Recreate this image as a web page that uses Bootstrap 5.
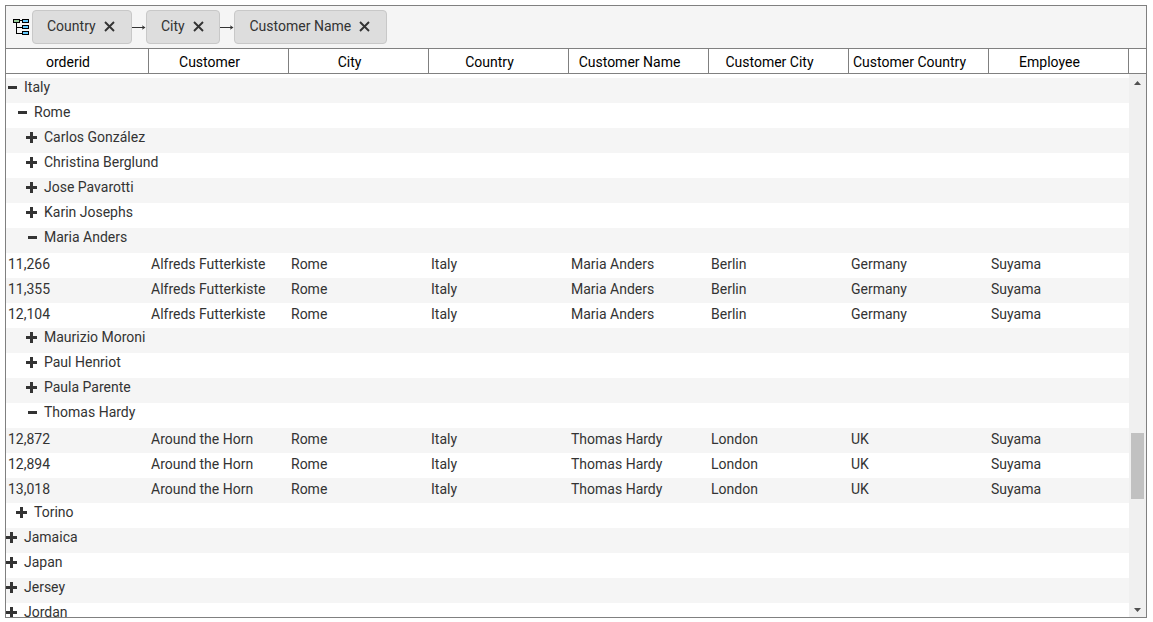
<!DOCTYPE html>
<html lang="en">
<head>
<meta charset="utf-8">
<title>Orders by country</title>
<link href="https://cdn.jsdelivr.net/npm/bootstrap@5.3.0/dist/css/bootstrap.min.css" rel="stylesheet">
<style>
body{font-family:Roboto,"Liberation Sans",sans-serif;font-size:14px;line-height:18px;color:#333;background:#fff}
.pivot-grid{margin:5px 0 0 5px;width:1142px;height:613px;border:1px solid #808080}
.group-bar{height:42px;background:#f5f5f5;padding-left:7px}
.group-icon{width:17px;height:18px;margin-right:2px}
.group-chip{height:34px;background:#ddd;border:1px solid #c8c8c8;border-radius:4px;padding:0 14px 2px 14px}
.group-chip svg{width:11px;height:11px;margin-left:8px}
.group-arrow{width:14px}
.head-row{height:26px;border-top:1px solid #808080;border-bottom:1px solid #808080;color:#000}
.head-cell{width:140px;border-right:1px solid #808080;padding-top:4px;padding-right:18px}
.head-cell:first-child{width:143px}
.grid-rows{padding-top:4px}
.grid-line{height:25px}
.grid-line:nth-child(odd){background:#f5f5f5}
.group-line svg{width:12px;height:12px;margin:4px 6px 0 0}
.data-cell{width:140px;padding:2px 0 0 2px}
.data-cell:first-child{width:143px}
.scroll-track{width:17px;background:#f0f0f0}
.scroll-arrow{height:17px;display:block}
.scroll-thumb{width:13px;height:66px;margin:342px 0 0 2px;background:#c1c1c1}
</style>
</head>
<body>
<div class="pivot-grid d-flex flex-column overflow-hidden">
  <div class="group-bar d-flex align-items-center flex-shrink-0">
    <svg class="group-icon" viewBox="0 0 17 18" shape-rendering="crispEdges"><path d="M6 2.500h4M3.500 4v11.500h6M3.500 9.500h6" stroke="#000" fill="none"/><path d="M.5 1.500h6v3h-6z" fill="#9c9" stroke="#000"/><path d="M9.500 1.500h6v3h-6zM9.500 7.500h6v3h-6zM9.500 13.500h6v3h-6z" fill="#6cf" stroke="#000"/></svg>
    <div class="group-chip d-flex align-items-center" style="width:100px">Country<svg viewBox="0 0 11 11"><path d="M1 1l9 9M10 1l-9 9" stroke="#333" stroke-width="1.900"/></svg></div>
    <svg class="group-arrow" height="10" viewBox="0 0 14 10"><path d="M0 5.500h12" stroke="#333"/><path d="M10 3.200l3.500 2.300L10 7.800l.8-2.300z" fill="#333"/></svg>
    <div class="group-chip d-flex align-items-center" style="width:74px">City<svg viewBox="0 0 11 11"><path d="M1 1l9 9M10 1l-9 9" stroke="#333" stroke-width="1.900"/></svg></div>
    <svg class="group-arrow" height="10" viewBox="0 0 14 10"><path d="M0 5.500h12" stroke="#333"/><path d="M10 3.200l3.500 2.300L10 7.800l.8-2.300z" fill="#333"/></svg>
    <div class="group-chip d-flex align-items-center text-nowrap" style="width:153px;padding-left:14.5px">Customer Name<svg viewBox="0 0 11 11"><path d="M1 1l9 9M10 1l-9 9" stroke="#333" stroke-width="1.900"/></svg></div>
  </div>
  <div class="head-row d-flex flex-shrink-0 text-center text-nowrap">
    <div class="head-cell">orderid</div><div class="head-cell">Customer</div><div class="head-cell">City</div><div class="head-cell">Country</div><div class="head-cell">Customer Name</div><div class="head-cell">Customer City</div><div class="head-cell">Customer Country</div><div class="head-cell">Employee</div>
  </div>
  <div class="d-flex flex-grow-1 overflow-hidden">
    <div class="grid-rows flex-grow-1" id="rows"></div>
    <div class="scroll-track flex-shrink-0 d-flex flex-column">
      <svg class="scroll-arrow" viewBox="0 0 17 17"><path d="M5 11l3.500-4L12 11z" fill="#505050"/></svg>
      <div class="scroll-thumb"></div>
      <svg class="scroll-arrow mt-auto" viewBox="0 0 17 17"><path d="M5 8l3.500 4L12 8z" fill="#505050"/></svg>
    </div>
  </div>
</div>
<script src="https://cdn.jsdelivr.net/npm/bootstrap@5.3.0/dist/js/bootstrap.bundle.min.js"></script>
<script>
// Group lines are [level, open, label]; order lines list their cell values.
const maria = ["Alfreds Futterkiste","Rome","Italy","Maria Anders","Berlin","Germany","Suyama"];
const thomas = ["Around the Horn","Rome","Italy","Thomas Hardy","London","UK","Suyama"];
const lines = [
  [0,true,"Italy"],[1,true,"Rome"],[2,false,"Carlos González"],[2,false,"Christina Berglund"],
  [2,false,"Jose Pavarotti"],[2,false,"Karin Josephs"],[2,true,"Maria Anders"],
  ["11,266",...maria],["11,355",...maria],["12,104",...maria],
  [2,false,"Maurizio Moroni"],[2,false,"Paul Henriot"],[2,false,"Paula Parente"],[2,true,"Thomas Hardy"],
  ["12,872",...thomas],["12,894",...thomas],["13,018",...thomas],
  [1,false,"Torino"],[0,false,"Jamaica"],[0,false,"Japan"],[0,false,"Jersey"],[0,false,"Jordan"]
];
const plus = '<path d="M0 5.500h11M5.500 0v11" stroke="#333" stroke-width="3"/>';
const minus = '<path d="M2 5.500h9" stroke="#333" stroke-width="3"/>';
document.getElementById("rows").innerHTML = lines.map(l => l.length === 3
  ? `<div class="grid-line group-line d-flex align-items-start" style="padding-left:${l[0]*10}px"><svg viewBox="0 0 12 12">${l[1] ? minus : plus}</svg>${l[2]}</div>`
  : `<div class="grid-line d-flex text-nowrap">${l.map(v => `<div class="data-cell">${v}</div>`).join("")}</div>`
).join("");
</script>
</body>
</html>
